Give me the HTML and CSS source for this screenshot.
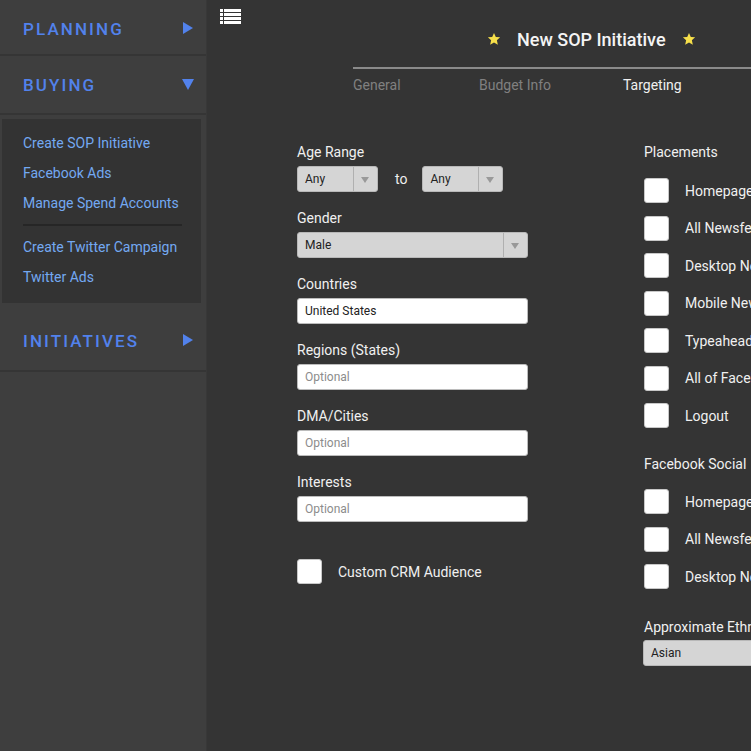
FILE: index.html
```html
<!DOCTYPE html>
<html>
<head>
<meta charset="utf-8">
<link rel="stylesheet" href="styles.css">
</head>
<body>
<aside class="sidebar">
  <div class="sec sec-first">
    <span class="sec-title">PLANNING</span>
    <span class="tri tri-right"></span>
  </div>
  <div class="sec sec-open">
    <span class="sec-title">BUYING</span>
    <span class="tri tri-down"></span>
  </div>
  <div class="submenu">
    <a class="sublink">Create SOP Initiative</a>
    <a class="sublink">Facebook Ads</a>
    <a class="sublink">Manage Spend Accounts</a>
    <div class="subsep"></div>
    <a class="sublink">Create Twitter Campaign</a>
    <a class="sublink">Twitter Ads</a>
  </div>
  <div class="sec sec-last">
    <span class="sec-title">INITIATIVES</span>
    <span class="tri tri-right"></span>
  </div>
</aside>
<main class="main">
  <div class="toolbar">
    <svg class="list-icon" width="21" height="16" viewBox="0 0 21 16">
      <rect x="0" y="0" width="3" height="3" fill="#fff"/>
      <rect x="4" y="0" width="17" height="3" fill="#fff"/>
      <rect x="0" y="4" width="3" height="3" fill="#fff"/>
      <rect x="4" y="4" width="17" height="3" fill="#fff"/>
      <rect x="0" y="8" width="3" height="3" fill="#fff"/>
      <rect x="4" y="8" width="17" height="3" fill="#fff"/>
      <rect x="0" y="12" width="3" height="3" fill="#fff"/>
      <rect x="4" y="12" width="17" height="3" fill="#fff"/>
    </svg>
  </div>
  <div class="header">
    <div class="title-row">
      <svg class="star" width="14" height="14" viewBox="0 0 24 24"><path d="M12 1.5l3.1 7 7.4.7-5.6 5 1.7 7.5L12 17.8 5.4 21.7l1.7-7.5-5.6-5 7.4-.7z" fill="#f7e04a"/></svg>
      <h1 class="title">New SOP Initiative</h1>
      <svg class="star" width="14" height="14" viewBox="0 0 24 24"><path d="M12 1.5l3.1 7 7.4.7-5.6 5 1.7 7.5L12 17.8 5.4 21.7l1.7-7.5-5.6-5 7.4-.7z" fill="#f7e04a"/></svg>
    </div>
    <div class="tabs">
      <span class="tab">General</span>
      <span class="tab">Budget Info</span>
      <span class="tab tab-active">Targeting</span>
    </div>
  </div>
  <div class="form">
    <div class="col col-left">
      <div class="field">
        <label class="lbl">Age Range</label>
        <div class="age-row">
          <div class="select select-small"><span class="sel-val">Any</span><span class="sel-arrow"></span></div>
          <span class="to">to</span>
          <div class="select select-small"><span class="sel-val">Any</span><span class="sel-arrow"></span></div>
        </div>
      </div>
      <div class="field">
        <label class="lbl">Gender</label>
        <div class="select"><span class="sel-val">Male</span><span class="sel-arrow"></span></div>
      </div>
      <div class="field">
        <label class="lbl">Countries</label>
        <div class="input">United States</div>
      </div>
      <div class="field">
        <label class="lbl">Regions (States)</label>
        <div class="input placeholder">Optional</div>
      </div>
      <div class="field">
        <label class="lbl">DMA/Cities</label>
        <div class="input placeholder">Optional</div>
      </div>
      <div class="field field-last">
        <label class="lbl">Interests</label>
        <div class="input placeholder">Optional</div>
      </div>
      <div class="check-row crm">
        <span class="cb"></span><span class="cb-label">Custom CRM Audience</span>
      </div>
    </div>
    <div class="col col-right">
      <label class="lbl">Placements</label>
      <div class="checks">
        <div class="check-row"><span class="cb"></span><span class="cb-label">Homepage</span></div>
        <div class="check-row"><span class="cb"></span><span class="cb-label">All Newsfeed</span></div>
        <div class="check-row"><span class="cb"></span><span class="cb-label">Desktop Newsfeed</span></div>
        <div class="check-row"><span class="cb"></span><span class="cb-label">Mobile Newsfeed</span></div>
        <div class="check-row"><span class="cb"></span><span class="cb-label">Typeahead</span></div>
        <div class="check-row"><span class="cb"></span><span class="cb-label">All of Facebook</span></div>
        <div class="check-row"><span class="cb"></span><span class="cb-label">Logout</span></div>
      </div>
      <label class="lbl lbl-social">Facebook Social</label>
      <div class="checks checks-social">
        <div class="check-row"><span class="cb"></span><span class="cb-label">Homepage</span></div>
        <div class="check-row"><span class="cb"></span><span class="cb-label">All Newsfeed</span></div>
        <div class="check-row"><span class="cb"></span><span class="cb-label">Desktop Newsfeed</span></div>
      </div>
      <label class="lbl lbl-eth">Approximate Ethnicity</label>
      <div class="select select-wide"><span class="sel-val">Asian</span><span class="sel-arrow"></span></div>
    </div>
  </div>
</main>
</body>
</html>
```
FILE: styles.css
```css
* { box-sizing: border-box; }
html, body { margin: 0; padding: 0; }
body {
  width: 751px;
  height: 751px;
  overflow: hidden;
  display: flex;
  background: #343434;
  font-family: Roboto, "Liberation Sans", sans-serif;
  color: #eeeeee;
}
.sidebar {
  width: 207px;
  flex: none;
  height: 751px;
  background: #3e3e3e;
  border-right: 1px solid #383838;
}
.sec {
  height: 56px;
  display: flex;
  align-items: center;
  justify-content: space-between;
  padding: 0 13px 0 23px;
  border-bottom: 2px solid #353535;
}
.sec-first { padding-top: 4px; }
.sec-open { height: 59px; }
.sec-last { height: 64px; padding-top: 3px; }
.sec-title {
  color: #5282ec;
  font-size: 17px;
  font-weight: 500;
  letter-spacing: 2.1px;
}
.tri { width: 0; height: 0; display: block; }
.tri-right {
  border-top: 6px solid transparent;
  border-bottom: 6px solid transparent;
  border-left: 10px solid #5282ec;
  margin-top: -2px;
}
.tri-down {
  border-left: 6px solid transparent;
  border-right: 6px solid transparent;
  border-top: 11px solid #5282ec;
  margin-right: -1px;
}
.submenu {
  margin: 4px 5px 5px 2px;
  background: #333333;
  padding: 16px 20px 8px 21px;
  height: 184px;
}
.sublink {
  display: block;
  color: #73a9f2;
  font-size: 14px;
  line-height: 16px;
  margin-bottom: 14px;
}
.subsep {
  height: 2px;
  background: #262626;
  margin: -1px 0 13px 0;
  width: 159px;
}
.main {
  flex: 1;
  min-width: 0;
}
.toolbar {
  height: 29px;
  padding: 9px 0 0 13px;
}
.list-icon { display: block; }
.header {
  margin-left: 146px;
  width: 600px;
}
.title-row {
  display: flex;
  align-items: center;
  height: 22px;
  padding-left: 134px;
}
.title {
  margin: 0 16px;
  font-size: 18px;
  font-weight: 500;
  color: #f4f4f4;
  line-height: 22px;
}
.star { display: block; margin-top: -2px; }
.tabs {
  margin-top: 16px;
  border-top: 2px solid #8a8a8a;
  display: grid;
  grid-template-columns: 126px 144px auto;
  padding-top: 8px;
  font-size: 14px;
  line-height: 16px;
}
.tab { color: #808080; }
.tab-active { color: #f0f0f0; }
.form {
  display: flex;
  margin-left: 90px;
  margin-top: 51px;
}
.col-left { width: 231px; flex: none; }
.col-right { margin-left: 116px; width: 200px; flex: none; }
.lbl {
  display: block;
  font-size: 14px;
  line-height: 16px;
  color: #f0f0f0;
  margin-bottom: 6px;
}
.field { margin-bottom: 18px; }
.field-last { margin-bottom: 0; }
.age-row { display: flex; align-items: center; }
.to { margin: 0 15px 0 17px; font-size: 14px; color: #eee; }
.select {
  height: 26px;
  background: #d5d5d5;
  border: 1px solid #b8b8b8;
  border-radius: 3px;
  display: flex;
  align-items: center;
  color: #222;
  font-size: 12px;
}
.select-small { width: 81px; }
.sel-val { flex: 1; padding-left: 7px; }
.sel-arrow {
  width: 24px;
  height: 100%;
  border-left: 1px solid #b0b0b0;
  position: relative;
}
.sel-arrow::after {
  content: "";
  position: absolute;
  left: 7px;
  top: 10px;
  border-left: 4px solid transparent;
  border-right: 4px solid transparent;
  border-top: 6px solid #999;
}
.select-wide { width: 200px; margin-left: -1px; }
.input {
  height: 26px;
  background: #ffffff;
  border: 1px solid #bcbcbc;
  border-radius: 3px;
  font-size: 12px;
  color: #222;
  padding-left: 7px;
  line-height: 24px;
}
.placeholder { color: #8c8c8c; }
.check-row {
  display: flex;
  align-items: center;
  height: 25px;
}
.cb {
  width: 25px;
  height: 25px;
  background: #fff;
  border: 1px solid #c8c8c8;
  border-radius: 3px;
  flex: none;
}
.cb-label {
  margin-left: 16px;
  font-size: 14px;
  color: #f0f0f0;
  white-space: nowrap;
}
.crm { margin-top: 37px; }
.checks {
  display: flex;
  flex-direction: column;
  gap: 12.5px;
  margin-top: 18px;
}
.checks-social { margin-top: 17px; }
.lbl-social { margin-top: 28px; margin-bottom: 0; }
.lbl-eth { margin-top: 30px; margin-bottom: 5px; }
```
